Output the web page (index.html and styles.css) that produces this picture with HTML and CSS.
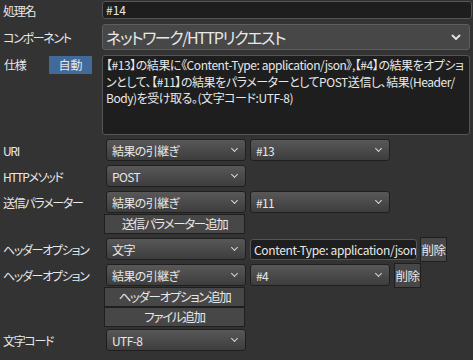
FILE: index.html
```
<!DOCTYPE html>
<html lang="ja">
<head>
    <meta charset="UTF-8">
    <title>コンポーネント設定</title>
    <link rel="stylesheet" href="styles.css">
</head>
<body>

<div class="form">
    <div class="row row-name">
        <div class="label">処理名</div>
        <div class="textbox wide">#14</div>
    </div>

    <div class="row row-component">
        <div class="label">コンポーネント</div>
        <div class="select big">
            <span>ネットワーク/HTTPリクエスト</span>
            <svg class="chev" width="10" height="6" viewBox="0 0 10 6"><path d="M1 1 L5 5 L9 1" fill="none" stroke="#e0e0e0" stroke-width="2"/></svg>
        </div>
    </div>

    <div class="row row-spec">
        <div class="spec-head">
            <div class="label spec-label">仕様</div>
            <div class="auto">自動</div>
        </div>
        <div class="memo">【#13】の結果に《Content-Type: application/json》,【#4】の結果をオプショ<br>ンとして、【#11】の結果をパラメーターとしてPOST送信し、結果(Header/<br>Body)を受け取る。(文字コード:UTF-8)</div>
    </div>

    <div class="row item">
        <div class="label">URI</div>
        <div class="select small"><span>結果の引継ぎ</span><i class="v"></i></div>
        <div class="select small"><span>#13</span><i class="v"></i></div>
    </div>

    <div class="row item">
        <div class="label">HTTPメソッド</div>
        <div class="select small"><span>POST</span><i class="v"></i></div>
    </div>

    <div class="row item">
        <div class="label">送信パラメーター</div>
        <div class="select small"><span>結果の引継ぎ</span><i class="v"></i></div>
        <div class="select small"><span>#11</span><i class="v"></i></div>
    </div>

    <div class="row btn-row">
        <div class="btn">送信パラメーター追加</div>
    </div>

    <div class="row item">
        <div class="label">ヘッダーオプション</div>
        <div class="select small"><span>文字</span><i class="v"></i></div>
        <div class="textbox header">Content-Type: application/json</div>
        <div class="del">削除</div>
    </div>

    <div class="row item">
        <div class="label">ヘッダーオプション</div>
        <div class="select small"><span>結果の引継ぎ</span><i class="v"></i></div>
        <div class="select small"><span>#4</span><i class="v"></i></div>
        <div class="del">削除</div>
    </div>

    <div class="row btn-row first">
        <div class="btn">ヘッダーオプション追加</div>
    </div>
    <div class="row btn-row second">
        <div class="btn">ファイル追加</div>
    </div>

    <div class="row item last">
        <div class="label">文字コード</div>
        <div class="select small"><span>UTF-8</span><i class="v"></i></div>
    </div>
</div>

</body>
</html>
```

FILE: styles.css
```
body {
    margin: 0;
    background-color: #333333;
    color: #e8e8e8;
    font-family: "Noto Sans CJK JP", "Noto Sans", sans-serif;
    font-size: 12px;
    font-feature-settings: "palt";
    overflow: hidden;
}
.form {
    width: 473px;
    height: 360px;
    display: flex;
    flex-direction: column;
}
.row {
    display: flex;
    align-items: center;
}
.label {
    width: 102px;
    flex: none;
    padding-left: 3px;
    box-sizing: border-box;
    white-space: nowrap;
    letter-spacing: -1.3px;
}
.textbox {
    background-color: #1e1e1e;
    border: 1px solid #555555;
    border-radius: 3px;
    box-sizing: border-box;
    padding-left: 3px;
    white-space: nowrap;
    overflow: hidden;
}
.wide {
    width: 370px;
    height: 18px;
    line-height: 16px;
}
.row-name {
    margin-top: 1px;
}
.row-component {
    margin-top: 5px;
}
.select {
    display: flex;
    align-items: center;
    justify-content: space-between;
    box-sizing: border-box;
    border-radius: 3px;
    white-space: nowrap;
}
.big {
    width: 368px;
    height: 26px;
    font-size: 16px;
    letter-spacing: -1.4px;
    padding: 0 8px 0 3px;
    background-color: #474747;
    border: 1px solid #5e5e5e;
}
.chev {
    display: block;
}
.row-spec {
    margin-top: 5px;
    align-items: flex-start;
}
.spec-head {
    width: 102px;
    flex: none;
    display: flex;
    align-items: center;
}
.spec-label {
    width: 49px;
    padding-left: 4px;
}
.auto {
    width: 43px;
    height: 18px;
    line-height: 18px;
    text-align: center;
    background-color: #41699a;
    margin-top: 1px;
}
.memo {
    width: 368px;
    height: 80px;
    box-sizing: border-box;
    background-color: #1e1e1e;
    border: 1px solid #555555;
    border-radius: 3px;
    padding: 1px 0 0 3px;
    line-height: 16.5px;
    letter-spacing: -0.45px;
    white-space: nowrap;
    overflow: hidden;
}
.item {
    height: 22px;
    margin-top: 4px;
}
.item .label {
    width: 106px;
}
.small {
    width: 140px;
    height: 22px;
    padding: 0 8px 0 5px;
    margin-right: 4px;
    letter-spacing: -0.6px;
    background: linear-gradient(#585858, #3d3d3d);
    border: 1px solid #1f1f1f;
}
.v {
    width: 4px;
    height: 4px;
    border-right: 1.5px solid #d8d8d8;
    border-bottom: 1.5px solid #d8d8d8;
    transform: rotate(45deg);
    margin-top: -3px;
}
.header {
    width: 167px;
    height: 21px;
    line-height: 19px;
    padding-left: 3px;
    font-size: 12px;
    letter-spacing: -0.35px;
    margin-right: 3px;
}
.del {
    width: 27px;
    height: 25px;
    flex: none;
    box-sizing: border-box;
    line-height: 23px;
    text-align: center;
    background-color: #474747;
    border: 1px solid #1f1f1f;
    font-size: 12.5px;
    letter-spacing: -0.5px;
    white-space: nowrap;
}
.btn-row {
    padding-left: 104px;
    margin-top: 1px;
}
.btn {
    width: 141px;
    height: 20px;
    box-sizing: border-box;
    line-height: 18px;
    text-align: center;
    background-color: #474747;
    border: 1px solid #1f1f1f;
    font-size: 12.5px;
    letter-spacing: -1.3px;
}
.btn-row.second {
    margin-top: 0;
}
.last {
    margin-top: 2px;
}
```
